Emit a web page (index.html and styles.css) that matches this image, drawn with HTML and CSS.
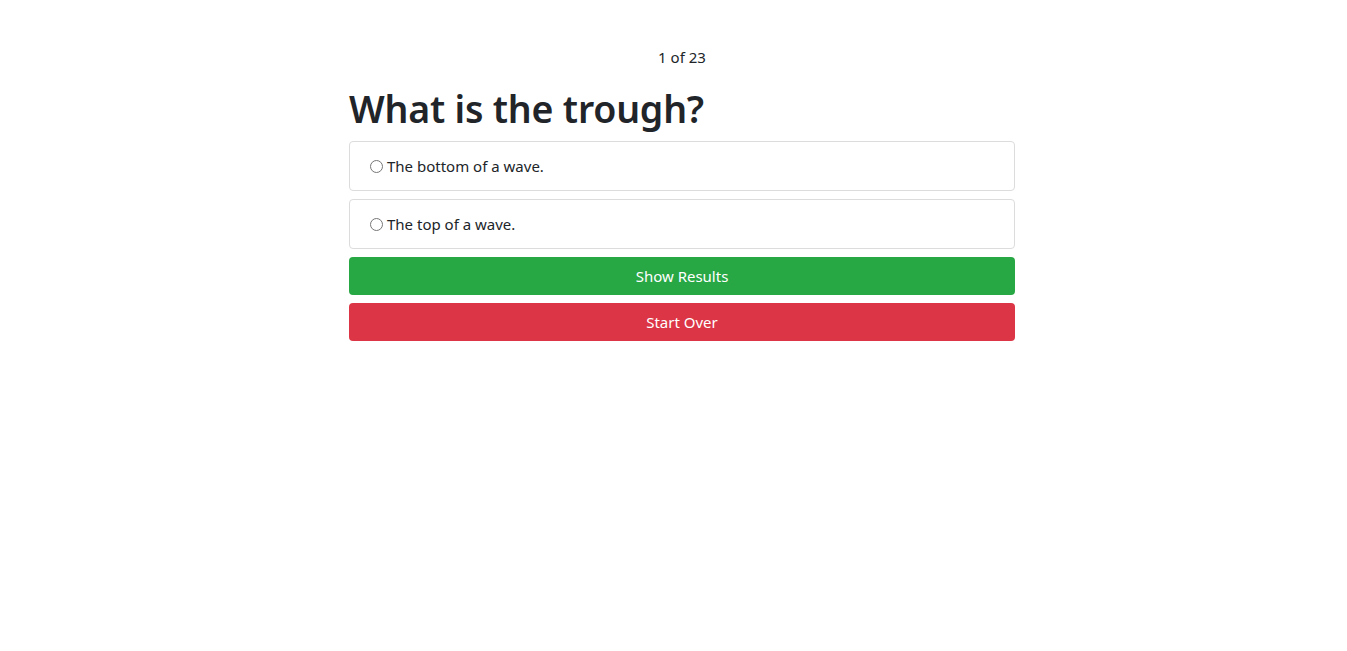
FILE: index.html
```html
<!DOCTYPE html>
<html lang="en">
<head>
<meta charset="utf-8">
<title>Quiz</title>
<link rel="stylesheet" href="styles.css">
</head>
<body>
<main class="quiz">
  <p class="counter">1 of 23</p>
  <h1 class="question">What is the trough?</h1>
  <label class="option"><input type="radio" name="answer"> The bottom of a wave.</label>
  <label class="option"><input type="radio" name="answer"> The top of a wave.</label>
  <button class="btn btn-success" type="button">Show Results</button>
  <button class="btn btn-danger" type="button">Start Over</button>
</main>
</body>
</html>
```
FILE: styles.css
```css
html, body {
  margin: 0;
  padding: 0;
  background: #fff;
}
body {
  font-family: "Noto Sans", "Open Sans", sans-serif;
  font-size: 15px;
  line-height: 1.5;
  color: #212529;
  padding-left: 17px;
}
.quiz {
  width: 666px;
  margin: 0 auto;
  display: flex;
  flex-direction: column;
  padding-top: 45px;
}
.counter {
  margin: 0 0 16px;
  text-align: center;
  line-height: 24px;
}
.question {
  margin: 0 0 8px;
  font-size: 37.5px;
  font-weight: 600;
  line-height: 48px;
  letter-spacing: -0.2px;
}
.option {
  display: flex;
  align-items: center;
  height: 50px;
  box-sizing: border-box;
  border: 1px solid #dcdcdc;
  border-radius: 4px;
  padding: 0 20px;
  margin-bottom: 8px;
  font-size: 15px;
}
.option input {
  margin: 0 4px 0 0;
  width: 13px;
  height: 13px;
}
.btn {
  height: 38px;
  border: 0;
  border-radius: 4px;
  margin-bottom: 8px;
  color: #fff;
  font-family: inherit;
  font-size: 15px;
  cursor: pointer;
}
.btn-success { background: #28a745; }
.btn-danger { background: #dc3545; }
```
